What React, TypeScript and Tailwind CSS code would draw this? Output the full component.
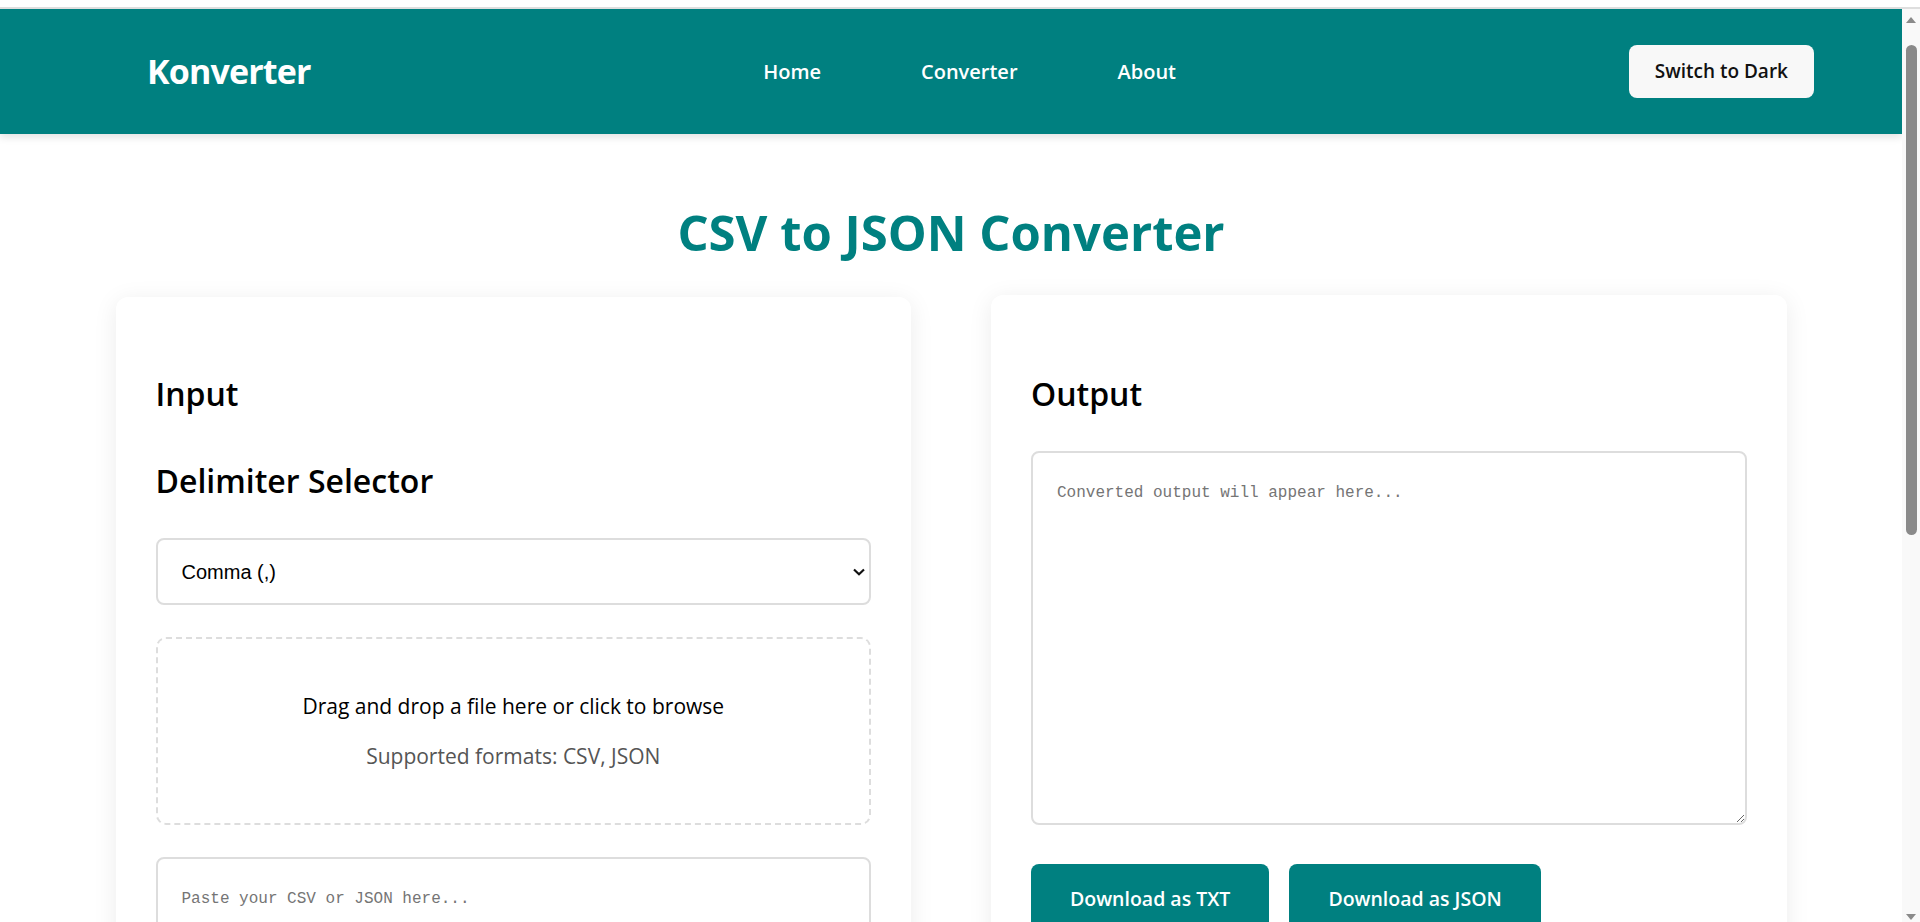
import { useState } from 'react';

export default function App() {
    const [delimiter, setDelimiter] = useState(',');
    const [input, setInput] = useState('');
    const [output] = useState('');

    const navLinks = ['Home', 'Converter', 'About'];

    return (
        <div className="h-screen overflow-hidden bg-white font-['Open_Sans',sans-serif] text-black">
            {/* top strip */}
            <div className="h-[9px] border-b-2 border-[#dedede] bg-white" />

            <div className="flex h-[913px]">
                <div className="min-w-0 flex-1 overflow-hidden">
                    {/* Header */}
                    <header className="relative z-10 flex h-[125px] items-center justify-between bg-[#008080] pl-[147px] pr-[88px] shadow-[0_3px_8px_rgba(0,0,0,0.12)]">
                        <div className="text-[34px] font-bold tracking-tight text-white">Konverter</div>
                        <nav className="flex gap-[100px] text-[20px] font-semibold text-white">
                            {navLinks.map((link) => (
                                <a key={link} href="#" className="hover:underline">
                                    {link}
                                </a>
                            ))}
                        </nav>
                        <button className="h-[53px] rounded-lg bg-[#f8f8f8] px-[26px] text-[19px] font-semibold text-[#111]">
                            Switch to Dark
                        </button>
                    </header>

                    {/* Title */}
                    <h1 className="mt-[69px] text-center text-[49px] leading-[58px] font-bold text-[#008080]">
                        CSV to JSON Converter
                    </h1>

                    {/* Panels */}
                    <div className="mx-auto mt-[36px] grid w-full max-w-[1671px] grid-cols-2 items-start gap-[80px]">
                        {/* Input card */}
                        <div className="rounded-xl bg-white px-10 pt-10 pb-10 shadow-[0_4px_24px_rgba(0,0,0,0.08)]">
                            <h2 className="mt-[37px] text-[32px] leading-10 font-semibold">Input</h2>
                            <h2 className="mt-[47px] text-[32px] leading-10 font-semibold">Delimiter Selector</h2>

                            <div className="relative mt-[37px]">
                                <select
                                    value={delimiter}
                                    onChange={(e) => setDelimiter(e.target.value)}
                                    className="h-[67px] w-full appearance-none rounded-lg border-2 border-[#dddddd] bg-white pl-6 font-['Liberation_Sans',Arial,sans-serif] text-[20px] text-black outline-none"
                                >
                                    <option value=",">Comma (,)</option>
                                    <option value=";">Semicolon (;)</option>
                                    <option value="\t">Tab</option>
                                    <option value="|">Pipe (|)</option>
                                </select>
                                <svg
                                    className="pointer-events-none absolute top-1/2 right-[6px] -translate-y-1/2"
                                    width="12"
                                    height="8"
                                    viewBox="0 0 12 8"
                                    fill="none"
                                >
                                    <path d="M1 1.5 L6 6.2 L11 1.5" stroke="#111" strokeWidth="2.2" />
                                </svg>
                            </div>

                            {/* Drop zone */}
                            <div className="mt-8 cursor-pointer rounded-[10px] border-2 border-dashed border-[#dddddd] px-8 py-8 text-center text-[21px] leading-[30px]">
                                <p className="my-5 text-black">Drag and drop a file here or click to browse</p>
                                <p className="my-5 text-[#555]">Supported formats: CSV, JSON</p>
                            </div>

                            <textarea
                                value={input}
                                onChange={(e) => setInput(e.target.value)}
                                placeholder="Paste your CSV or JSON here..."
                                className="mt-8 block h-[373px] w-full rounded-lg border-2 border-[#dddddd] p-6 font-['Liberation_Mono',monospace] text-[16px] leading-8 outline-none placeholder:text-[#757575]"
                            />

                            <button className="mt-10 h-[70px] rounded-lg bg-[#008080] px-[39px] text-[19.5px] font-semibold text-white">
                                Convert
                            </button>
                        </div>

                        {/* Output card */}
                        <div className="-translate-y-[2px] rounded-xl bg-white px-10 pt-10 pb-10 shadow-[0_4px_24px_rgba(0,0,0,0.08)]">
                            <h2 className="mt-[39px] text-[32px] leading-10 font-semibold">Output</h2>

                            <textarea
                                value={output}
                                readOnly
                                placeholder="Converted output will appear here..."
                                className="mt-[37px] block h-[374px] w-full rounded-lg border-2 border-[#dddddd] p-6 font-['Liberation_Mono',monospace] text-[16px] leading-8 outline-none placeholder:text-[#757575]"
                            />

                            <div className="mt-[39px] flex gap-5">
                                <button className="h-[70px] rounded-lg bg-[#008080] px-[39px] text-[19.5px] font-semibold text-white">
                                    Download as TXT
                                </button>
                                <button className="h-[70px] rounded-lg bg-[#008080] px-[39px] text-[19.5px] font-semibold text-white">
                                    Download as JSON
                                </button>
                            </div>
                        </div>
                    </div>

                    <div className="h-16" />
                </div>

                {/* scrollbar */}
                <div className="flex w-[18px] flex-col items-center bg-[#f9f9f9] pt-[8px] pb-[2px]">
                    <svg width="10" height="6" viewBox="0 0 10 6">
                        <path d="M5 0 L10 6 L0 6 Z" fill="#8a8a8a" />
                    </svg>
                    <div className="mt-[22px] h-[490px] w-[11px] rounded-full bg-[#8a8a8a]" />
                    <div className="flex-1" />
                    <svg width="10" height="6" viewBox="0 0 10 6">
                        <path d="M0 0 L10 0 L5 6 Z" fill="#8a8a8a" />
                    </svg>
                </div>
            </div>
        </div>
    );
}
